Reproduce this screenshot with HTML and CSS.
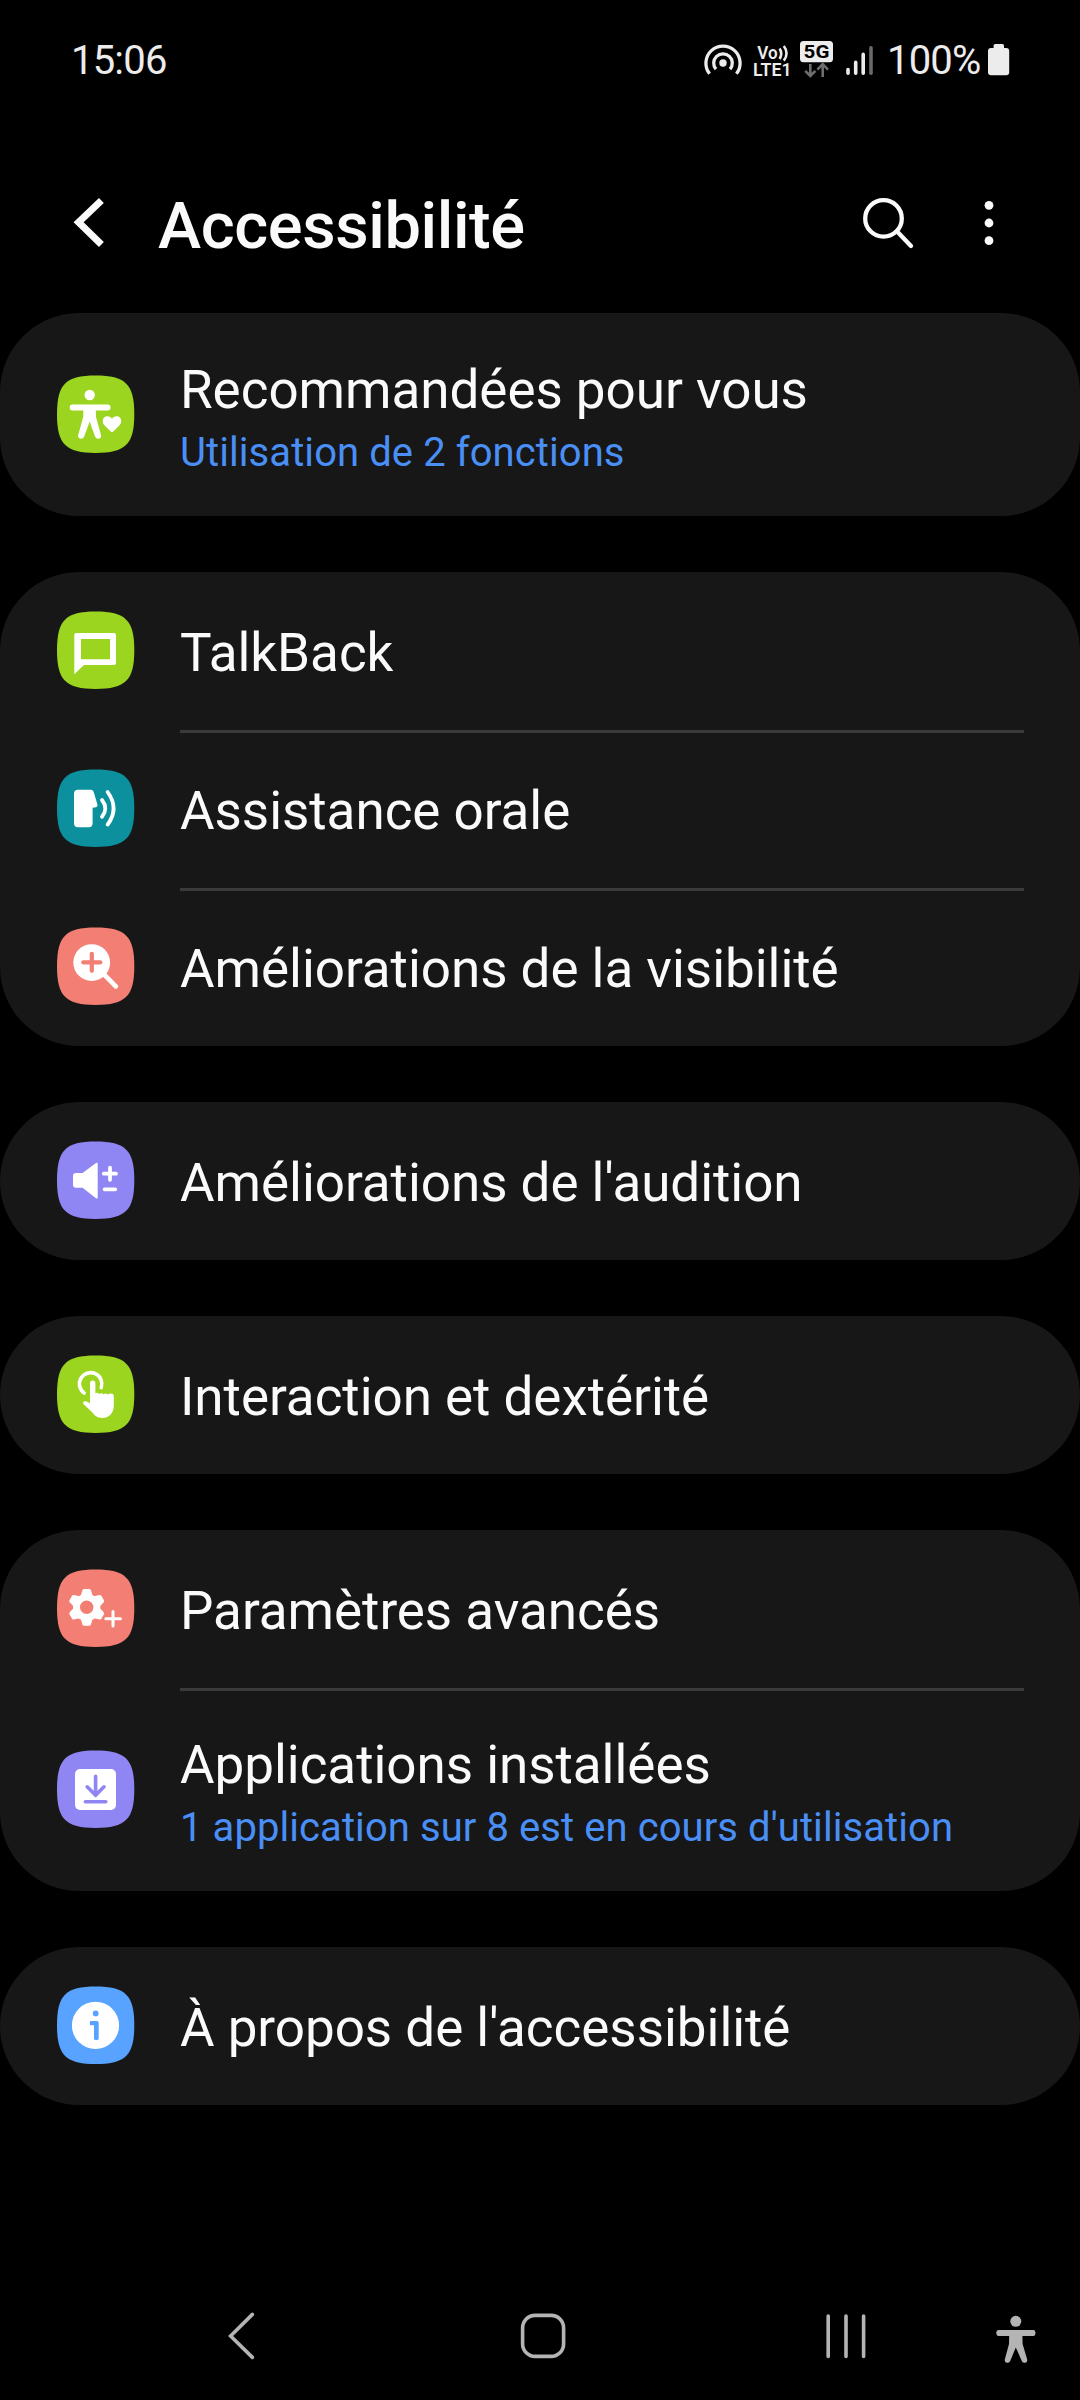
FILE: index.html
```html
<!DOCTYPE html>
<html lang="fr">
<head>
<meta charset="utf-8">
<title>Accessibilité</title>
<link rel="stylesheet" href="styles.css">
</head>
<body>
<svg class="defs" width="0" height="0" aria-hidden="true">
  <symbol id="tile" viewBox="0 0 80 80"><path d="M39.6 .6C69.6 .6 78.3 9.4 78.3 39.3S69.6 78 39.6 78 1 69.2 1 39.3 9.6 .6 39.6 .6Z"/></symbol>
</svg>
<div class="screen">
  <div class="status">
    <span class="clock">15:06</span>
    <svg class="status-icons" width="180" height="40" viewBox="700 40 180 40">
      <g fill="none" stroke="#ececec" stroke-width="3.3">
        <path d="M709.6 73.8A17.1 17.1 0 1 1 736.4 73.8"/>
        <path d="M716 69.2A9.3 9.3 0 1 1 730 69.2"/>
      </g>
      <circle cx="723" cy="63" r="3.7" fill="#ececec"/>
      <g class="net">
        <text x="757.3" y="59.2" font-size="17.5" textLength="20.4" lengthAdjust="spacingAndGlyphs">Vo</text>
        <text x="753" y="76.3" font-size="18" textLength="38.5" lengthAdjust="spacingAndGlyphs">LTE1</text>
      </g>
      <path d="M779.6 48.5Q782.8 53.5 779.6 59M783.8 46Q789.4 53.5 783.8 60.6" fill="none" stroke="#ececec" stroke-width="2.6"/>
      <rect x="800" y="41" width="33" height="21.3" rx="3.5" fill="#ececec"/>
      <text class="g5" x="803.6" y="58.2" textLength="25.8" lengthAdjust="spacingAndGlyphs">5G</text>
      <path d="M810.3 64V75.6M805.2 70.8L810.3 76L815.4 70.8M822.7 77V65M817.4 69.6L822.7 64.2L828 69.6" fill="none" stroke="#6e6e6e" stroke-width="2.6"/>
      <g stroke="#ececec" stroke-width="3.6" stroke-linecap="round">
        <path d="M848 69.6V73.2M855.7 62.4V73.2M863.2 54.4V73.2"/>
        <path d="M871 47.8V73.2" stroke="#6a6a6a"/>
      </g>
    </svg>
    <span class="percent">100%</span>
    <svg class="battery" width="22" height="34" viewBox="0 0 22 34" fill="#ececec"><rect x="0" y="5" width="21.2" height="27.3" rx="3"/><rect x="5.6" y="1" width="10.4" height="7" rx="1.5"/></svg>
  </div>

  <header class="bar">
    <svg class="back" width="40" height="60" viewBox="70 193 40 60"><path d="M101.4 200.4L78.6 222.3L101.4 244.4" fill="none" stroke="#fafafa" stroke-width="7"/></svg>
    <h1>Accessibilité</h1>
    <svg class="search" width="60" height="60" viewBox="860 193 60 60" fill="none" stroke="#fafafa" stroke-width="4.3" stroke-linecap="round"><circle cx="883.5" cy="218.4" r="18.3"/><path d="M897.6 231.9L911 246"/></svg>
    <svg class="more" width="20" height="60" viewBox="979 193 20 60" fill="#fafafa"><circle cx="989" cy="205.3" r="4.4"/><circle cx="989" cy="223" r="4.4"/><circle cx="989" cy="240.7" r="4.4"/></svg>
  </header>

  <main class="groups">
    <section class="card">
      <div class="row tall">
        <svg class="icon green" viewBox="0 0 80 80"><use href="#tile"/>
          <g class="glyph"><circle cx="33.7" cy="20" r="5.2"/><rect x="13.7" y="29.6" width="40.8" height="5.8" rx="2.6"/><path d="M27.4 33H39.8L40 42L45 60Q45.6 63.3 42.6 63.8Q40 64 39 61.4L33.7 46.6L28.2 61.4Q27.2 64 24.6 63.8Q21.6 63.3 22.2 60L27.2 42Z"/><path d="M56 57.2Q55 57.2 48.6 50.6C45.6 47.4 46.4 43 49.6 41.6C52.2 40.6 54.8 41.6 56 43.8C57.2 41.6 59.8 40.6 62.4 41.6C65.6 43 66.4 47.4 63.4 50.6Q57 57.2 56 57.2Z"/></g>
        </svg>
        <div class="text"><span class="name">Recommandées pour vous</span><span class="sub">Utilisation de 2 fonctions</span></div>
      </div>
    </section>

    <section class="card">
      <div class="row">
        <svg class="icon green" viewBox="0 0 80 80"><use href="#tile"/><path class="glyph" fill-rule="evenodd" d="M20.3 22H58Q60 22 60 24V52Q60 54 58 54H28L18.3 63.3V24Q18.3 22 20.3 22ZM25 28V48.3H54V28Z"/></svg>
        <div class="text"><span class="name">TalkBack</span></div>
      </div>
      <div class="row">
        <svg class="icon teal" viewBox="0 0 80 80"><use href="#tile"/>
          <path class="glyph" d="M22 20.7H34.6Q37 20.7 37.7 23L41.4 35.6Q42 38 40 38.2L36.6 38.8V54.3Q36.6 58.2 32.8 58.2H22Q18 58.2 18 54.3V24.7Q18 20.7 22 20.7Z"/>
          <path class="stroke" stroke-width="3.8" d="M46 31Q52.6 39.5 46 47.8M51.6 23Q63.6 39.5 51.6 55.6"/></svg>
        <div class="text"><span class="name">Assistance orale</span></div>
      </div>
      <div class="row">
        <svg class="icon coral" viewBox="0 0 80 80"><use href="#tile"/><circle class="glyph" cx="35.7" cy="35.6" r="18.4"/><path class="hole" stroke-width="4.2" d="M27.2 35.3H44.4M35.8 26.8V43.8"/><path class="stroke" stroke-width="4.8" d="M49 48.4L59.8 59.4"/></svg>
        <div class="text"><span class="name">Améliorations de la visibilité</span></div>
      </div>
    </section>

    <section class="card">
      <div class="row">
        <svg class="icon violet" viewBox="0 0 80 80"><use href="#tile"/><path class="glyph" d="M20 32H26.6L39.6 22.2Q41.7 21 41.7 23V56.2Q41.7 58.4 39.6 57L26.6 46.8H20Q17 46.8 17 43.8V35Q17 32 20 32Z"/><path class="stroke" stroke-width="3.8" d="M47.8 32.7H60M54 26.6V38.8M48.6 48.3H59.2"/></svg>
        <div class="text"><span class="name">Améliorations de l'audition</span></div>
      </div>
    </section>

    <section class="card">
      <div class="row">
        <svg class="icon green" viewBox="0 0 80 80"><use href="#tile"/><path class="stroke" stroke-width="3.6" stroke-linecap="butt" d="M28.2 38A11.2 11.2 0 1 1 45.2 32.6"/><path class="glyph" d="M34 28.2A2.7 2.7 0 0 1 39.4 28.2V38.2Q41.4 37 43.4 39Q45.6 37.4 47.6 39.4Q49.8 37.6 51.8 39.6Q54 38 57 39Q57.8 39.6 57.8 42V50.4C57.8 58 53 63 46.2 63C41 63 38.4 60.4 36.4 57.6L27.4 49Q26.4 45.8 29.6 46.2Q32 46.6 34 48.4Z"/></svg>
        <div class="text"><span class="name">Interaction et dextérité</span></div>
      </div>
    </section>

    <section class="card">
      <div class="row">
        <svg class="icon coral" viewBox="0 0 80 80"><use href="#tile"/>
          <g transform="translate(30.7 38.3)"><g class="glyph"><circle r="13.6"/><g id="teeth"><path id="tooth" d="M-5.8 -12L-4.2 -17.2Q-3.8 -18.4 -2.6 -18.4H2.6Q3.8 -18.4 4.2 -17.2L5.8 -12V0H-5.8Z"/><use href="#tooth" transform="rotate(60)"/><use href="#tooth" transform="rotate(120)"/></g><use href="#teeth" transform="rotate(180)"/></g><circle r="6.7"/></g>
          <path class="stroke" stroke-width="3" d="M49.8 49.7H64.4M57 42.4V57"/></svg>
        <div class="text"><span class="name">Paramètres avancés</span></div>
      </div>
      <div class="row tall">
        <svg class="icon violet" viewBox="0 0 80 80"><use href="#tile"/><rect class="glyph" x="19" y="19" width="41" height="41" rx="5"/><path class="hole" stroke-width="3.6" d="M39.6 26.4V45.4M31.2 36.8L39.6 45.2L48 36.8M29.4 51.7H49.8"/></svg>
        <div class="text"><span class="name">Applications installées</span><span class="sub">1 application sur 8 est en cours d'utilisation</span></div>
      </div>
    </section>

    <section class="card">
      <div class="row">
        <svg class="icon blue" viewBox="0 0 80 80"><use href="#tile"/><circle class="glyph" cx="39.5" cy="39.4" r="23.6"/><circle cx="39.7" cy="27.4" r="2.9"/><path d="M35 35H41Q42.7 35 42.7 36.7V52.6Q42.7 54 41.3 54H39.3Q38 54 38 52.6V39.2H35Q33.8 39.2 33.8 38V36.2Q33.8 35 35 35Z"/></svg>
        <div class="text"><span class="name">À propos de l'accessibilité</span></div>
      </div>
    </section>
  </main>

  <nav class="nav">
    <svg width="40" height="60" viewBox="220 2306 40 60"><path d="M252.4 2314.4L230.6 2336L252.4 2357.4"/></svg>
    <svg width="60" height="60" viewBox="513 2306 60 60"><rect x="522.6" y="2315.4" width="41" height="41" rx="12.5"/></svg>
    <svg width="50" height="60" viewBox="821 2306 50 60"><path d="M828.2 2316V2356.4M846 2316V2356.4M863.6 2316V2356.4"/></svg>
    <svg class="man" width="50" height="60" viewBox="991 2306 50 60"><circle cx="1015.8" cy="2321.3" r="5.5"/><rect x="996.4" y="2330" width="39" height="6" rx="2.2"/><path d="M1009.2 2334H1022.4L1022.6 2344L1027.2 2359.4Q1027.6 2362 1025.4 2362.8Q1022.8 2363.2 1021.8 2361L1015.8 2347.4L1010.2 2361Q1009 2363.2 1006.6 2362.8Q1004.4 2362 1004.8 2359.4L1009 2344Z"/></svg>
  </nav>
</div>
</body>
</html>
```
FILE: styles.css
```css
* { box-sizing: border-box; }
body { margin: 0; background: #000; font-family: Roboto, "Liberation Sans", sans-serif; }
.defs { position: absolute; }
svg { display: block; flex: none; }
.screen { width: 1080px; height: 2400px; display: flex; flex-direction: column; overflow: hidden; color: #fafafa; }

.status { height: 120px; padding: 40px 70px 0 71px; display: flex; align-items: flex-start; color: #ececec; font-size: 40px; line-height: 40px; }
.clock { padding-top: 1px; letter-spacing: -0.8px; }
.status-icons { margin-left: auto; }
.net { fill: #ececec; font-weight: 600; }
.g5 { fill: #000; font-size: 18px; font-weight: 700; }
.percent { width: 98px; margin-left: 7px; padding-top: 1px; letter-spacing: -0.8px; white-space: nowrap; }
.battery { margin: 3px 0 0 3px; }

.bar { height: 193px; padding: 73px 81px 0 70px; display: flex; align-items: flex-start; }
h1 { margin: -6px 0 0 48px; font-size: 65px; line-height: 78px; font-weight: 500; letter-spacing: -0.4px; white-space: nowrap; }
.search { margin-left: auto; }
.more { margin-left: 59px; }

.groups { display: flex; flex-direction: column; gap: 56px; }
.card { background: #171717; border-radius: 79px; }
.row { height: 158px; padding-left: 56px; display: flex; align-items: flex-start; }
.tall { height: 203px; }
.icon { width: 80px; height: 80px; margin-top: 39px; }
.tall .icon { margin-top: 62px; }
.text { flex: 1; height: 100%; margin: 0 56px 0 44px; padding-top: 50px; display: flex; flex-direction: column; align-items: flex-start; }
.tall .text { padding-top: 46px; }
.row + .row .text { border-top: 3px solid #3a3a3a; padding-top: 47px; }
.row + .tall .text { padding-top: 43px; }
.name { font-size: 53px; line-height: 62px; letter-spacing: -0.04px; white-space: nowrap; }
.sub { margin-top: 9px; font-size: 40px; line-height: 46px; letter-spacing: 0.08px; color: #4a8ff5; white-space: nowrap; }

.glyph { fill: #fff; }
.stroke { fill: none; stroke: #fff; stroke-linecap: round; }
.hole { fill: none; stroke: currentColor; stroke-linecap: round; stroke-linejoin: round; }
.icon { fill: currentColor; }
.green { color: #9bd51f; }
.teal { color: #0d909e; }
.coral { color: #f37e73; }
.violet { color: #9086f3; }
.blue { color: #57a3ff; }

.nav { margin-top: auto; height: 94px; padding-left: 220px; display: flex; }
.nav svg { fill: none; stroke: #b4b4b4; stroke-width: 3.6; stroke-linecap: round; }
.nav svg:nth-child(1) { margin-right: 253px; }
.nav svg:nth-child(2) { margin-right: 248px; }
.nav svg:nth-child(3) { margin-right: 120px; }
.nav .man { fill: #b4b4b4; stroke: none; }
```
